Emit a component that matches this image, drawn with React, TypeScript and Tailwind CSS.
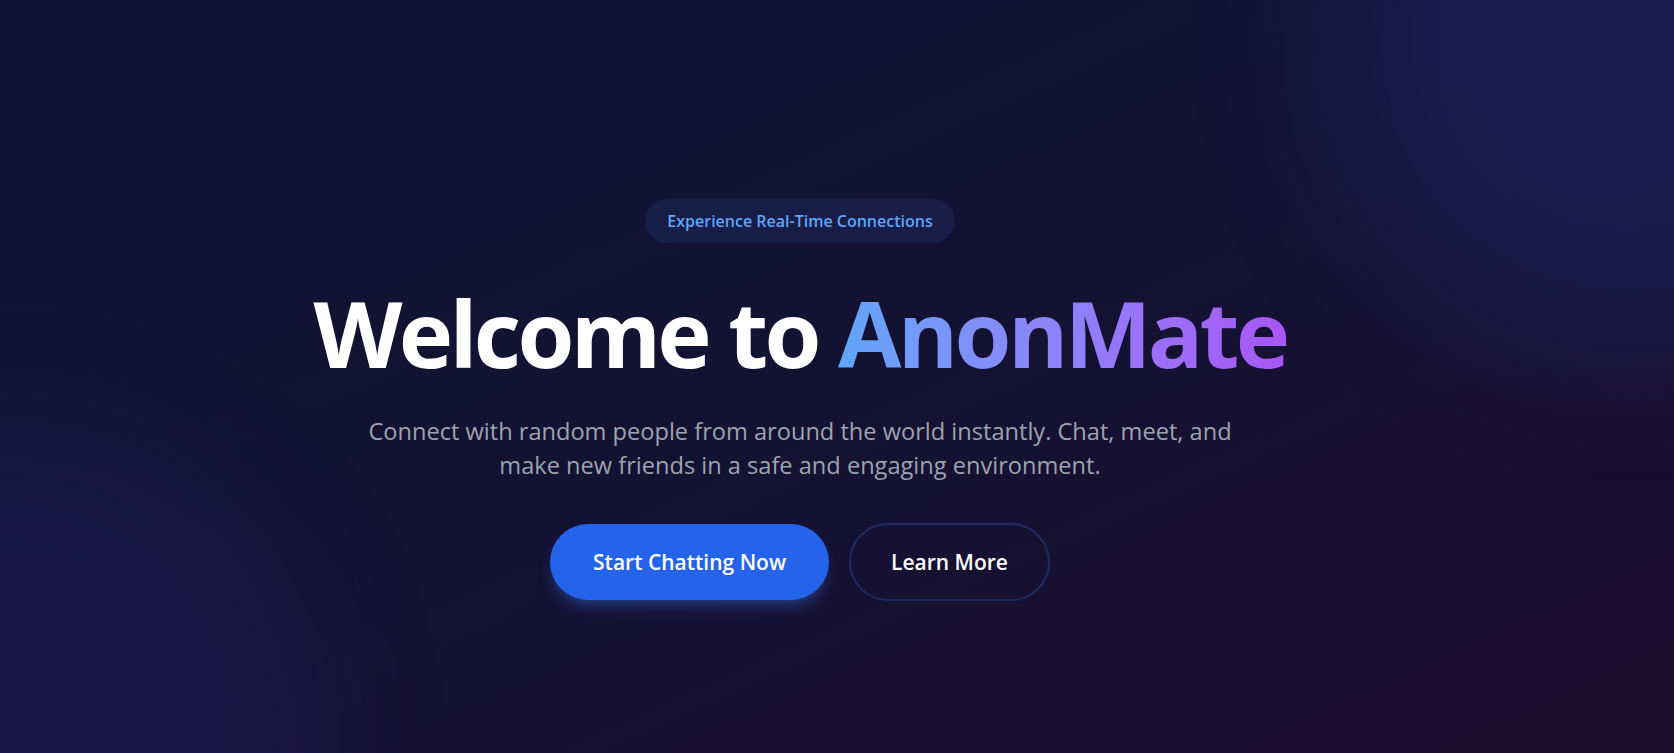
import { useState } from "react"

function Hero() {
  const [hover, setHover] = useState<boolean>(false)

  return (
    <div className="flex flex-col items-center text-center">
      <div className="rounded-full bg-[#3b82f6]/10 px-[22px] py-2.5 text-base leading-6 font-semibold text-[#60a5fa]">
        Experience Real-Time Connections
      </div>

      <h1 className="mt-[44px] text-[92px] leading-none font-bold tracking-[-0.04em] text-white">
        Welcome to{" "}
        <span className="bg-gradient-to-r from-[#60a5fa] to-[#a855f7] bg-clip-text text-transparent">
          AnonMate
        </span>
      </h1>

      <p className="mt-[35px] w-[880px] text-[23.6px] leading-[34px] text-[#9ca3af]">
        Connect with random people from around the world instantly. Chat, meet, and make new friends in a safe and engaging environment.
      </p>

      <div className="mt-[41px] flex items-center gap-5">
        <button
          onMouseEnter={() => setHover(true)}
          onMouseLeave={() => setHover(false)}
          className={"rounded-full px-[43px] py-6 text-[21px] leading-7 font-semibold text-white shadow-lg shadow-[#3b82f6]/30 transition-all " + (hover ? "bg-[#1d4ed8]" : "bg-[#2563eb]")}
        >
          Start Chatting Now
        </button>
        <button className="rounded-full border-2 border-[#1f2c62] px-10 py-[23px] text-[21px] leading-7 font-semibold text-white">
          Learn More
        </button>
      </div>
    </div>
  )
}

export default function App() {
  return (
    <div className="relative h-[753px] w-full overflow-hidden bg-gradient-to-br from-[#0f1434] via-[#141233] to-[#1b0e2f] font-['Open_Sans',sans-serif]">
      {/* corner glows */}
      <div className="absolute -top-64 -right-64 h-[600px] w-[600px] rounded-full bg-[#252a7a]/35 blur-3xl"></div>
      <div className="absolute -bottom-72 -left-72 h-[600px] w-[600px] rounded-full bg-[#2b1f80]/25 blur-3xl"></div>

      <div className="relative flex h-full items-start justify-center pt-[199px] pr-[74px]">
        <Hero />
      </div>
    </div>
  )
}
